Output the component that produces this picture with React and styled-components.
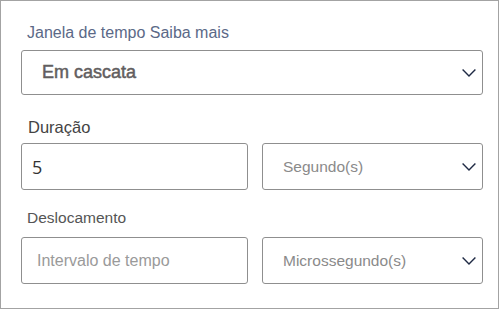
import styled, { createGlobalStyle } from "styled-components";

const GlobalStyle = createGlobalStyle`
  html, body { margin: 0; padding: 0; background: #fff; }
  body { font-family: "Liberation Sans", Arial, sans-serif; }
`;

const Chevron = () => (
  <svg width="14" height="8" viewBox="0 0 14 8" fill="none">
    <path d="M0.6 0.6L7 7L13.4 0.6" stroke="#1f2a44" strokeWidth="1.4" />
  </svg>
);

const App = () => (
  <>
    <GlobalStyle />
    <Panel>
      <Label tone="#5b6987" size={16} top={24}>
        Janela de tempo Saiba mais
      </Label>
      <Select height={45} top={9}>
        <SelectText big>Em cascata</SelectText>
        <Chevron />
      </Select>

      <Heading>Duração</Heading>
      <Row top={6}>
        <Input>
          <Value>5</Value>
        </Input>
        <Select height={47}>
          <SelectText>Segundo(s)</SelectText>
          <Chevron />
        </Select>
      </Row>

      <Label tone="#555" size={15.5} top={20}>
        Deslocamento
      </Label>
      <Row top={11}>
        <Input>
          <Placeholder>Intervalo de tempo</Placeholder>
        </Input>
        <Select height={47}>
          <SelectText>Microssegundo(s)</SelectText>
          <Chevron />
        </Select>
      </Row>
    </Panel>
  </>
);

const Panel = styled.div`
  box-sizing: border-box;
  width: 499px;
  height: 309px;
  border: 1px solid #a3a3a3;
  padding: 0 15px 0 20px;
`;

const Label = styled.div`
  margin-top: ${({ top }) => top}px;
  padding-left: 6px;
  font-size: ${({ size }) => size}px;
  line-height: 16px;
  color: ${({ tone }) => tone};
`;

const Heading = styled.div`
  margin-top: 22px;
  padding-left: 7px;
  font-size: 16.5px;
  line-height: 20px;
  color: #444;
`;

const Select = styled.div`
  box-sizing: border-box;
  flex: 1;
  height: ${({ height }) => height}px;
  margin-top: ${({ top }) => top || 0}px;
  border: 1px solid #8f8f8f;
  border-radius: 3px;
  display: flex;
  align-items: center;
  justify-content: space-between;
  padding: 0 6px 0 20px;
`;

const SelectText = styled.span`
  font-size: ${({ big }) => (big ? 18 : 15.5)}px;
  color: ${({ big }) => (big ? "#625e60" : "#8a8a8a")};
  -webkit-text-stroke: ${({ big }) => (big ? "0.5px #625e60" : "0")};
`;

const Row = styled.div`
  display: flex;
  gap: 14px;
  margin-top: ${({ top }) => top}px;
`;

const Input = styled.div`
  box-sizing: border-box;
  width: 227px;
  height: 47px;
  border: 1px solid #8f8f8f;
  border-radius: 3px;
  display: flex;
  align-items: center;
  padding-left: 10px;
`;

const Value = styled.span`
  font-family: "Open Sans", sans-serif;
  font-size: 18px;
  color: #333;
`;

const Placeholder = styled.span`
  padding-left: 5px;
  font-size: 16px;
  color: #9a9a9a;
`;

export default App;
